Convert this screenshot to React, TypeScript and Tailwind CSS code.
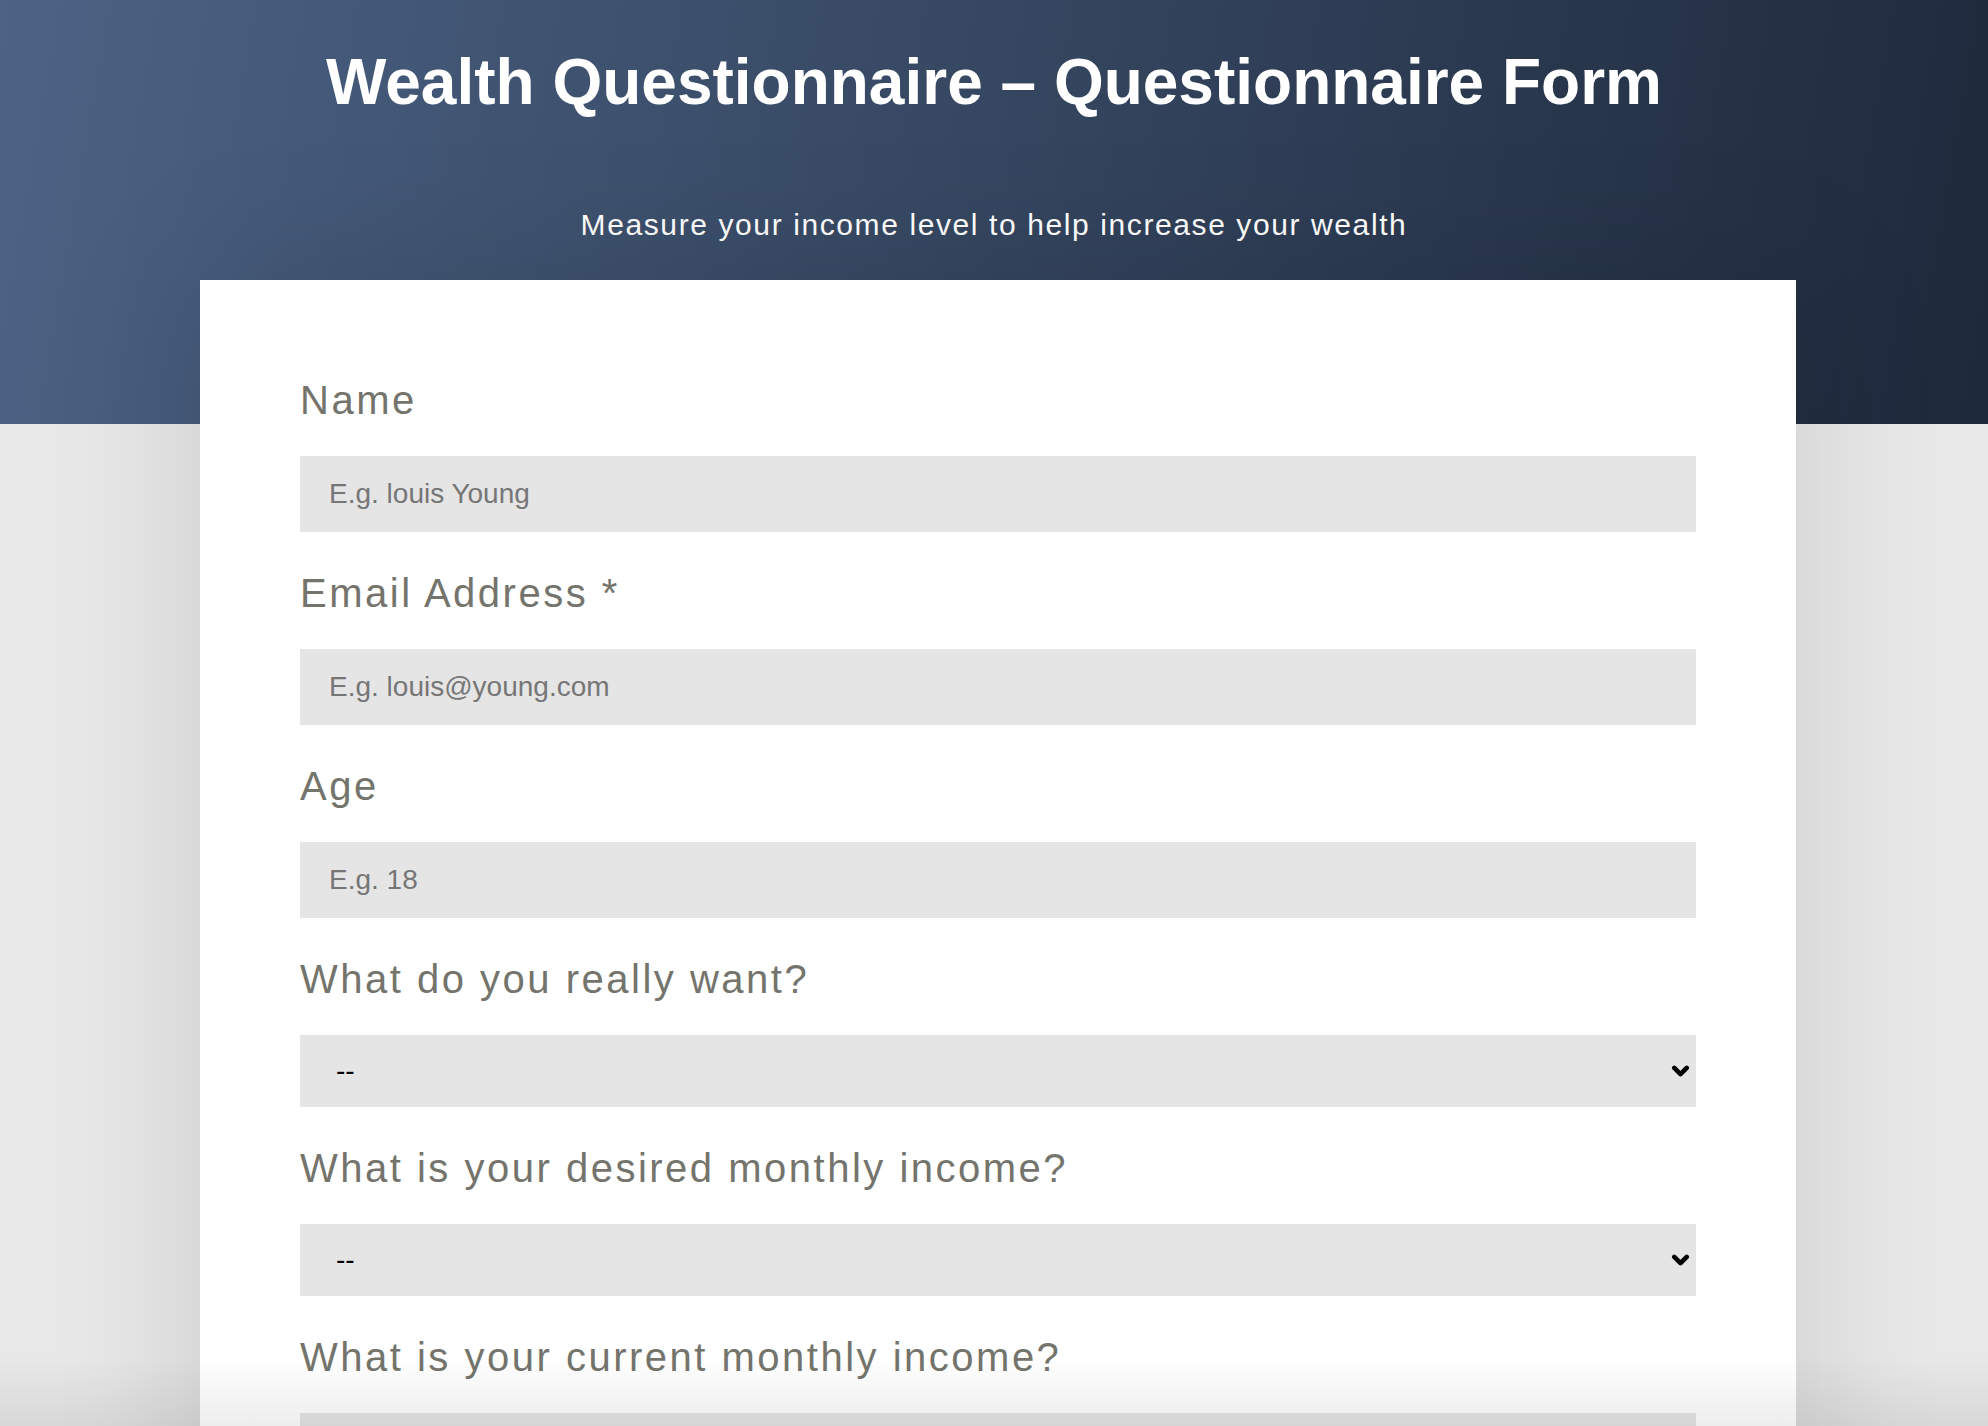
import { ChevronDown } from "lucide-react";

const labelCls =
  "block text-[40px] leading-none tracking-[2.5px] text-[#74746c] mb-[36px]";
const fieldCls =
  "w-full h-[76px] bg-[#e5e5e5] px-[29px] text-[28px] text-[#333] placeholder:text-[#767676] outline-none border-0";

function TextField({ label, placeholder }: { label: string; placeholder: string }) {
  return (
    <div className="mb-[41px]">
      <label className={labelCls}>{label}</label>
      <input type="text" placeholder={placeholder} className={fieldCls} />
    </div>
  );
}

function SelectField({ label, options }: { label: string; options: string[] }) {
  return (
    <div className="mb-[41px]">
      <label className={labelCls}>{label}</label>
      <div className="relative">
        <select
          defaultValue="--"
          className="w-full h-[72px] appearance-none bg-[#e5e5e5] pl-[36px] pr-[40px] text-[28px] text-black outline-none border-0"
        >
          <option value="--">--</option>
          {options.map((o) => (
            <option key={o} value={o}>
              {o}
            </option>
          ))}
        </select>
        <ChevronDown
          className="pointer-events-none absolute right-[3px] top-1/2 -translate-y-1/2 w-[25px] h-[25px] text-black"
          strokeWidth={4.5}
        />
      </div>
    </div>
  );
}

export default function App() {
  return (
    <div className="bg-[#11111f]">
      <div
        className="relative min-h-screen overflow-hidden rounded-b-[12px] bg-[#e8e8e8]"
        style={{ fontFamily: '"Liberation Sans", Arial, sans-serif' }}
      >
        <header className="h-[424px] bg-linear-[100deg] from-[#4c6385] to-[#1e293b] text-center text-white">
          <h1 className="pt-[50px] text-[64px] leading-none font-bold">
            Wealth Questionnaire – Questionnaire Form
          </h1>
          <p className="mt-[96px] text-[30px] leading-none tracking-[1.6px]">
            Measure your income level to help increase your wealth
          </p>
        </header>

        <main className="relative -mt-[144px] ml-[200px] w-[1596px] bg-white px-[100px] pt-[100px] pb-[100px] shadow-[0_0_140px_rgba(0,0,0,0.13)]">
          <form>
            <TextField label="Name" placeholder="E.g. louis Young" />
            <TextField label="Email Address *" placeholder="E.g. louis@young.com" />
            <TextField label="Age" placeholder="E.g. 18" />
            <SelectField
              label="What do you really want?"
              options={["More money", "More free time", "Financial freedom"]}
            />
            <SelectField
              label="What is your desired monthly income?"
              options={["$5,000", "$10,000", "$20,000+"]}
            />
            <SelectField
              label="What is your current monthly income?"
              options={["Under $2,000", "$2,000 - $5,000", "$5,000+"]}
            />
            <button
              type="submit"
              className="mt-[20px] h-[76px] w-full bg-[#1e293b] text-[28px] text-white"
            >
              Submit
            </button>
          </form>
        </main>

        <div className="pointer-events-none absolute inset-x-0 top-[1356px] h-[70px] bg-linear-to-b from-transparent to-black/[0.07]" />
      </div>
    </div>
  );
}
